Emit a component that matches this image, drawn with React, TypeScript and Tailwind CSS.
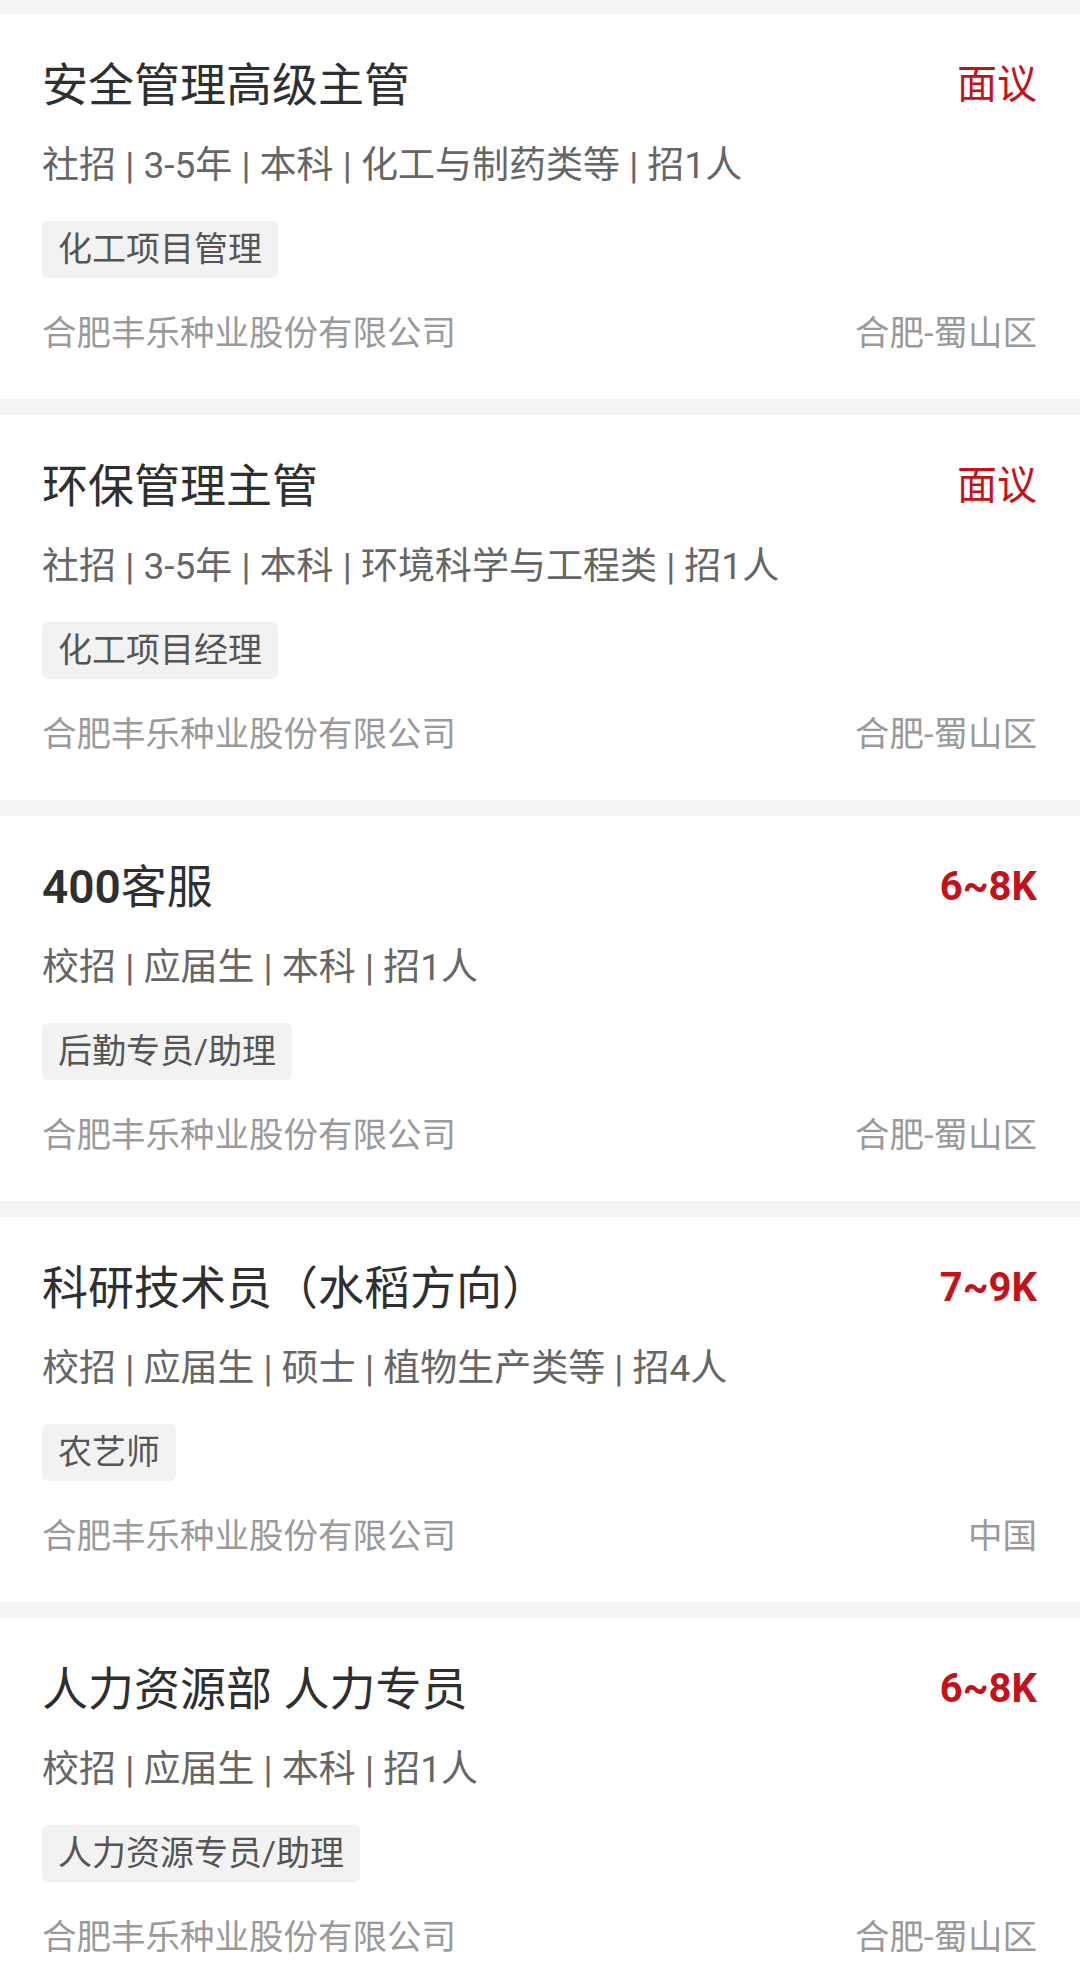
import React from 'react';

type Job = {
  id: number;
  title: React.ReactNode;
  salary: string;
  salaryBold?: boolean;
  info: string;
  tag: string;
  company: string;
  location: string;
};

const jobs: Job[] = [
  {
    id: 1,
    title: '安全管理高级主管',
    salary: '面议',
    info: '社招 | 3-5年 | 本科 | 化工与制药类等 | 招1人',
    tag: '化工项目管理',
    company: '合肥丰乐种业股份有限公司',
    location: '合肥-蜀山区',
  },
  {
    id: 2,
    title: '环保管理主管',
    salary: '面议',
    info: '社招 | 3-5年 | 本科 | 环境科学与工程类 | 招1人',
    tag: '化工项目经理',
    company: '合肥丰乐种业股份有限公司',
    location: '合肥-蜀山区',
  },
  {
    id: 3,
    title: (
      <>
        <span className="font-semibold">400</span>客服
      </>
    ),
    salary: '6~8K',
    salaryBold: true,
    info: '校招 | 应届生 | 本科 | 招1人',
    tag: '后勤专员/助理',
    company: '合肥丰乐种业股份有限公司',
    location: '合肥-蜀山区',
  },
  {
    id: 4,
    title: '科研技术员（水稻方向）',
    salary: '7~9K',
    salaryBold: true,
    info: '校招 | 应届生 | 硕士 | 植物生产类等 | 招4人',
    tag: '农艺师',
    company: '合肥丰乐种业股份有限公司',
    location: '中国',
  },
  {
    id: 5,
    title: '人力资源部 人力专员',
    salary: '6~8K',
    salaryBold: true,
    info: '校招 | 应届生 | 本科 | 招1人',
    tag: '人力资源专员/助理',
    company: '合肥丰乐种业股份有限公司',
    location: '合肥-蜀山区',
  },
];

const JobCard = ({ job }: { job: Job }) => {
  return (
    <div className="bg-white pl-[42px] pr-[43px] pt-[43px] pb-[42px]">
      <div className="flex h-[56px] items-center justify-between">
        <h3 className="text-[46px] leading-[56px] font-normal text-[#2f2f2f]">{job.title}</h3>
        <span
          className={
            job.salaryBold
              ? 'text-[40px] leading-[56px] font-bold text-[#c4121b]'
              : 'text-[40px] leading-[56px] font-normal text-[#c4121b]'
          }
        >
          {job.salary}
        </span>
      </div>
      <p className="mt-[29px] text-[37px] leading-[48px] text-[#666666] whitespace-nowrap">{job.info}</p>
      <div className="mt-[31px] flex">
        <span className="h-[57px] rounded-md bg-[#f2f2f2] px-[16px] text-[34px] leading-[57px] text-[#555555]">
          {job.tag}
        </span>
      </div>
      <div className="mt-[31px] flex items-center justify-between text-[34.5px] leading-[48px] text-[#9a9a9a]">
        <span>{job.company}</span>
        <span>{job.location}</span>
      </div>
    </div>
  );
};

export default function App() {
  return (
    <div
      className="min-h-screen bg-[#f4f4f6] pt-[14px]"
      style={{ fontFamily: 'Roboto, "Noto Sans CJK SC", sans-serif' }}
    >
      <div className="flex flex-col gap-[16px]">
        {jobs.map((job) => (
          <JobCard key={job.id} job={job} />
        ))}
      </div>
    </div>
  );
}
